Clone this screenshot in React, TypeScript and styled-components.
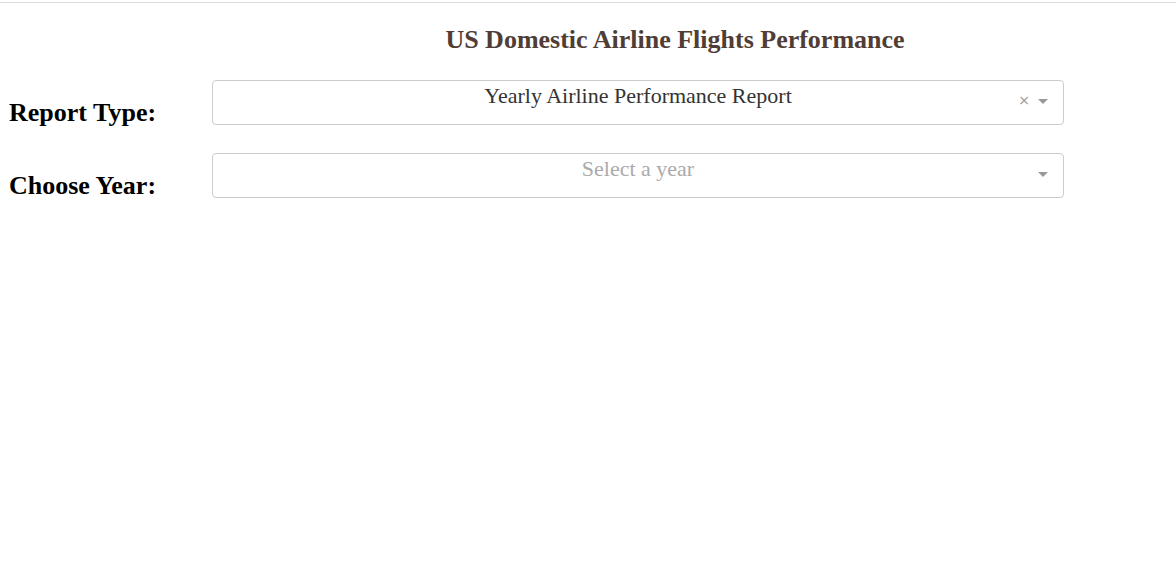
import React from 'react';
import styled, { createGlobalStyle } from 'styled-components';

const GlobalStyle = createGlobalStyle`
    html, body {
        margin: 0;
        padding: 0;
        background: #fff;
        font-family: "Liberation Serif", "Times New Roman", serif;
    }
`;

const Page = styled.div`
    margin-top: 2px;
    border-top: 1px solid #dddddd;
    width: 1176px;
    height: 569px;
    box-sizing: border-box;
`;

const Title = styled.h1`
    margin: 0;
    padding: 22px 0 0 174px;
    height: 56px;
    box-sizing: border-box;
    text-align: center;
    color: #503d36;
    font-size: 26px;
    font-weight: bold;
    line-height: 30px;
`;

const FormRow = styled.div<{ gap: number }>`
    display: flex;
    align-items: flex-start;
    height: 45px;
    margin-top: ${(props) => props.gap}px;
`;

const Label = styled.h2`
    margin: 0;
    flex-shrink: 0;
    width: 212px;
    height: 45px;
    box-sizing: border-box;
    padding: 21px 0 0 9px;
    font-size: 26px;
    font-weight: bold;
    line-height: 24px;
    color: #000;
`;

const SelectControl = styled.div`
    position: relative;
    flex-shrink: 0;
    width: 852px;
    height: 45px;
    box-sizing: border-box;
    border: 1px solid #cccccc;
    border-radius: 4px;
    background: #fff;
    text-align: center;
    font-size: 22px;
    line-height: 24px;
    padding-top: 3px;
`;

const Value = styled.span<{ placeholder?: boolean }>`
    color: ${(props) => (props.placeholder ? '#aaaaaa' : '#333333')};
`;

const Clear = styled.span`
    position: absolute;
    right: 33px;
    top: 7px;
    color: #999;
    font-family: "DejaVu Sans", sans-serif;
    font-size: 14px;
    line-height: 24px;
`;

const Arrow = styled.span`
    position: absolute;
    right: 15px;
    top: 18px;
    width: 0;
    height: 0;
    border-color: #999 transparent transparent;
    border-style: solid;
    border-width: 5px 5px 2.5px;
`;

const App: React.FC = () => {
    return (
        <>
            <GlobalStyle />
            <Page>
                <Title>US Domestic Airline Flights Performance</Title>

                <FormRow gap={21}>
                    <Label>Report Type:</Label>
                    <SelectControl>
                        <Value>Yearly Airline Performance Report</Value>
                        <Clear>×</Clear>
                        <Arrow />
                    </SelectControl>
                </FormRow>

                <FormRow gap={28}>
                    <Label>Choose Year:</Label>
                    <SelectControl>
                        <Value placeholder>Select a year</Value>
                        <Arrow />
                    </SelectControl>
                </FormRow>
            </Page>
        </>
    );
};

export default App;
